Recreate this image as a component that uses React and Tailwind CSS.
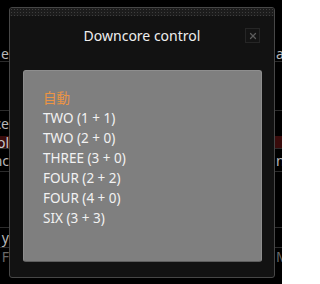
import { X } from "lucide-react";

const font = { fontFamily: '"Noto Sans", "Noto Sans CJK JP", sans-serif' };

const options = [
  "TWO (1 + 1)",
  "TWO (2 + 0)",
  "THREE (3 + 0)",
  "FOUR (2 + 2)",
  "FOUR (4 + 0)",
  "SIX (3 + 3)",
];

// settings list behind the dialog; only the edges of each row show
const BgRow = ({ left, right, className = "" }) => (
  <div className={`grid grid-cols-[9px_1fr_7px] items-center ${className}`}>
    <div className="flex justify-end overflow-hidden whitespace-nowrap">
      <span>{left}</span>
    </div>
    <div />
    <div className="overflow-hidden whitespace-nowrap pl-[1px]">{right}</div>
  </div>
);

export default function App() {
  return (
    <div
      className="relative w-[282px] h-[284px] bg-black text-[14px] text-[#b8b8b8] overflow-hidden"
      style={font}
    >
      <div className="flex flex-col pt-[46px]">
        <BgRow left="e" right="a" className="h-[16px] border-b border-[#2c2c2c]" />
        <div className="h-[49px] border-b border-[#2c2c2c]" />
        <BgRow left="ce" right="" className="h-[25px]" />
        <BgRow left="ol" right="" className="h-[13px] bg-[#3a0c0c] text-[#c8c8c8] border-b border-[#2c2c2c]" />
        <BgRow left="nc" right="nb" className="h-[23px] border-b border-[#2c2c2c]" />
        <div className="h-[56px] border-b border-[#2c2c2c]" />
        <BgRow left="y" right="" className="h-[20px] border-b border-[#2c2c2c]" />
        <BgRow left="F" right="M" className="h-[16px] text-[#6a6a6a]" />
      </div>

      <div className="absolute left-[9px] top-[7px] w-[266px] h-[271px] flex flex-col rounded-[3px] border border-[#474747] bg-[#121212]">
        <div className="h-[8px] rounded-t-[2px] bg-[#1c1c1c] bg-[radial-gradient(#3e3e3e_0.8px,transparent_1px)] bg-[length:3px_3px]" />
        <div className="relative h-[40px] flex items-center justify-center pb-[2px]">
          <span className="text-[14px] text-[#eeeeee]">Downcore control</span>
          <div className="absolute right-[14px] top-[12px] w-[15px] h-[15px] flex items-center justify-center border border-[#262626] bg-[#141414]">
            <X className="w-[10px] h-[10px] text-[#5c5c5c]" strokeWidth={3} />
          </div>
        </div>
        <div className="mt-[14px] ml-[13px] mr-[12px] h-[192px] rounded-[3px] border border-[#8e8e8e] border-b-[#5e5e5e] bg-[#7f7f7f] pt-[17px] pl-[19px] text-[13.5px] leading-[20px]">
          <div className="text-[#ec9445]">自動</div>
          {options.map((o, i) => (
            <div key={i} className="text-[#f2f2f2]">
              {o}
            </div>
          ))}
        </div>
      </div>
    </div>
  );
}
